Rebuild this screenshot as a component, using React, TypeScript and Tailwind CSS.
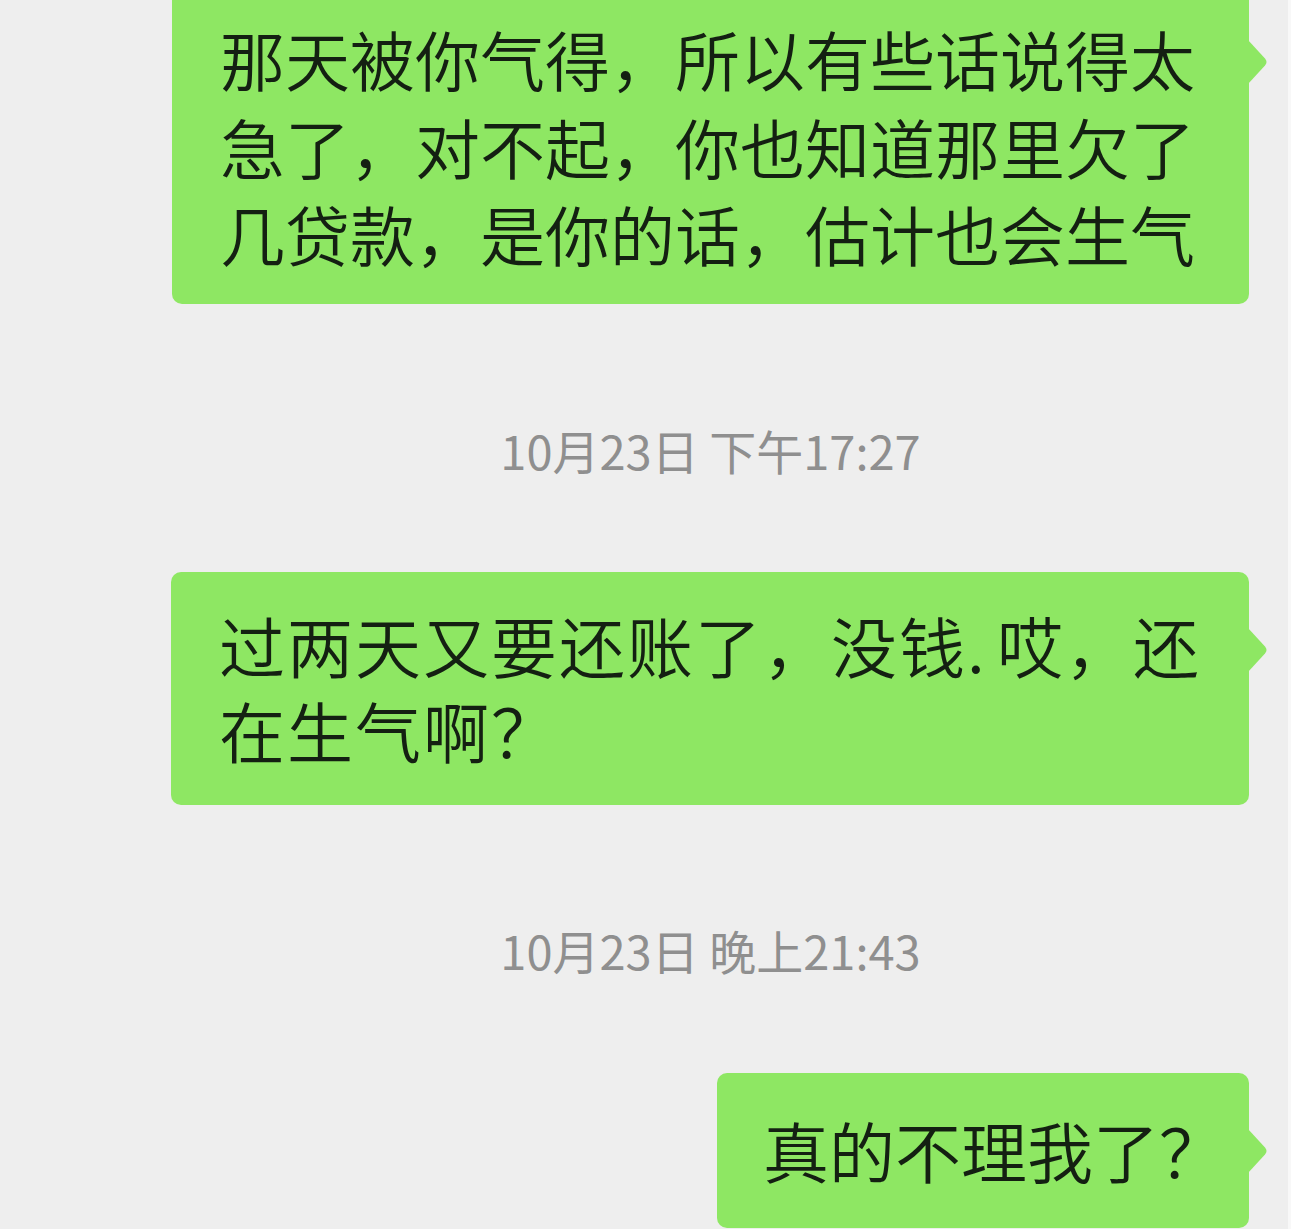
import React from "react";

const FONT = { fontFamily: '"Noto Sans CJK SC", "Noto Sans", sans-serif' };

function Tail() {
  return (
    <svg
      className="absolute left-[calc(100%-1px)] top-[56px]"
      width="22"
      height="44"
      viewBox="0 0 22 44"
    >
      <path d="M0 0 L17 18.5 Q20 22 17 25.5 L0 44 Z" fill="#8ee763" />
    </svg>
  );
}

function Timestamp({ children }: { children: React.ReactNode }) {
  return (
    <div className="flex justify-center pl-[172px]">
      <div className="text-[47px] font-normal leading-[60px] text-[#8f8f8f]" style={FONT}>
        {children}
      </div>
    </div>
  );
}

export default function App() {
  return (
    <div
      className="w-[1291px] h-[1229px] overflow-hidden bg-[#eeeeee] text-[#142012] font-[350] border-r-[3px] border-r-[#f8f8f8]"
      style={FONT}
    >
      <div className="flex flex-col pr-[39px]">
        {/* Bubble 1 */}
        <div className="flex justify-end mt-[-16px]">
          <div className="relative w-[1077px] rounded-[10px] bg-[#8ee763] pl-[48px] pt-[31px] pb-[26px] text-[65px] leading-[87.5px] whitespace-nowrap">
            <div>那天被你气得，所以有些话说得太</div>
            <div>急了，对不起，你也知道那里欠了</div>
            <div>几贷款，是你的话，估计也会生气</div>
            <Tail />
          </div>
        </div>

        <div className="mt-[116px]">
          <Timestamp>10月23日 下午17:27</Timestamp>
        </div>

        {/* Bubble 2 */}
        <div className="flex justify-end mt-[92px]">
          <div className="relative w-[1078px] h-[233px] rounded-[10px] bg-[#8ee763] pl-[48px] pt-[30px] text-[66px] tracking-[2px] leading-[85px] whitespace-nowrap">
            <div>
              过两天又要还账了，没钱<span className="inline-block w-[30px]">.</span>哎，还
            </div>
            <div>在生气啊？</div>
            <Tail />
          </div>
        </div>

        <div className="mt-[115px]">
          <Timestamp>10月23日 晚上21:43</Timestamp>
        </div>

        {/* Bubble 3 */}
        <div className="flex justify-end mt-[93px]">
          <div className="relative w-[532px] h-[155px] rounded-[10px] bg-[#8ee763] pl-[46px] pt-[33px] text-[66px] leading-[86px] whitespace-nowrap">
            <div>真的不理我了？</div>
            <Tail />
          </div>
        </div>
      </div>
    </div>
  );
}
